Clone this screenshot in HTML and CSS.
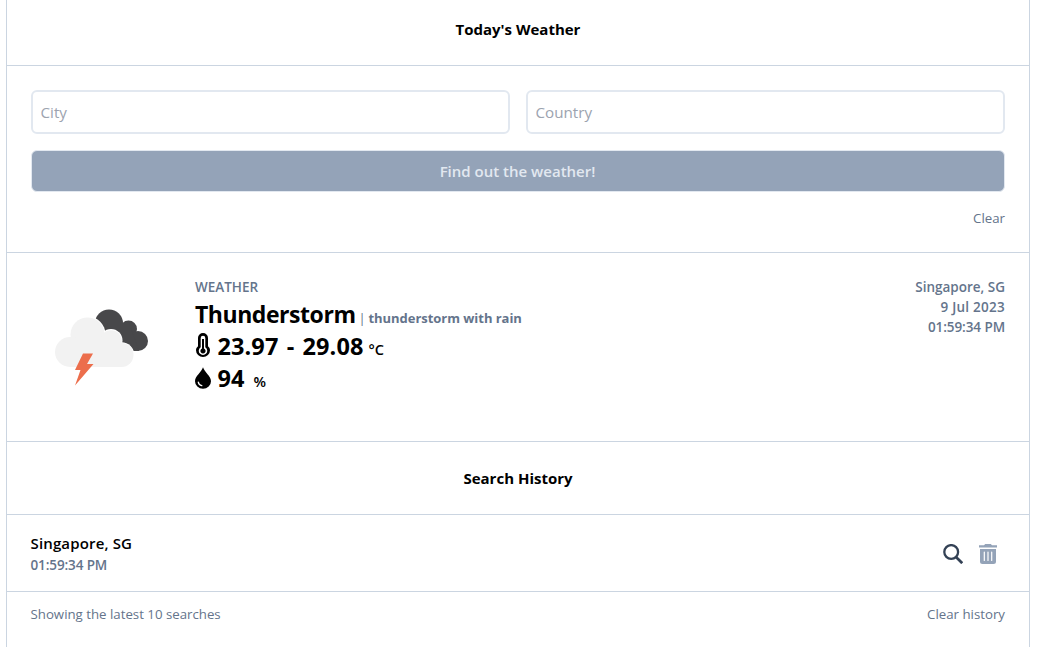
FILE: index.html
```
<!DOCTYPE html>
<html lang="en">
<head>
<meta charset="utf-8">
<title>Today's Weather</title>
<link rel="stylesheet" href="styles.css">
</head>
<body>
<main class="panel">
  <header class="heading heading-top"><h1>Today's Weather</h1></header>
  <form class="search">
    <div class="fields">
      <input class="field" type="text" placeholder="City">
      <input class="field" type="text" placeholder="Country">
    </div>
    <button class="submit" type="button">Find out the weather!</button>
    <div class="actions"><a class="link">Clear</a></div>
  </form>
  <section class="weather">
    <svg class="art" viewBox="0 0 164 140">
      <g fill="#48484a"><circle cx="78" cy="46.500" r="14"/><circle cx="97.500" cy="52" r="8.500"/><circle cx="107" cy="64" r="10"/><path d="M76 46h22l10 28H80z"/></g>
      <g fill="#fff"><circle cx="56.500" cy="57.500" r="18"/><circle cx="80" cy="63.500" r="11.500"/><circle cx="90.500" cy="78" r="12.800"/></g>
      <g fill="#f2f2f2"><circle cx="56.500" cy="57.500" r="17"/><circle cx="39" cy="75" r="15"/><circle cx="80" cy="64" r="10.800"/><circle cx="90.500" cy="78" r="12"/><path d="M39 62h42l9 15v13H39z"/></g>
      <path fill="#ec6e4c" d="M52 76.500h10l-6 10.500h6.500L44 108.500l5.500-15.500H44z"/>
    </svg>
    <div class="facts">
      <p class="label">WEATHER</p>
      <p class="fact"><span class="big name">Thunderstorm</span><span class="desc"><span class="bar">|</span> thunderstorm with rain</span></p>
      <p class="fact"><svg class="icon" viewBox="0 0 16 24"><path fill="#000" d="M8 0a5 5 0 0 0-5 5v8.200C1.700 14.300 1 15.700 1 17.300a7 6.700 0 0 0 14 0c0-1.600-.7-3-2-4.100V5a5 5 0 0 0-5-5z"/><path fill="#fff" d="M8 2.700A2.300 2.300 0 0 0 5.700 5v9.300a4.200 4.200 0 1 0 4.600 0V5A2.300 2.300 0 0 0 8 2.700z"/><path fill="#000" d="M7 6h2v9.500a2.600 2.600 0 1 1-2 0z"/></svg><span class="big temp">23.97 - 29.08</span><span class="unit">°C</span></p>
      <p class="fact"><svg class="icon drop" viewBox="0 0 16 24"><path fill="#000" d="M8 1.200C6.500 6.200 0 10 0 15.200a8 7.500 0 0 0 16 0C16 10 9.500 6.200 8 1.200z"/><path fill="none" stroke="#fff" stroke-width="1.300" stroke-linecap="round" d="M3.300 16.200a4.200 4.200 0 0 0 3.500 3.500"/></svg><span class="big">94</span><span class="unit percent">%</span></p>
    </div>
    <div class="place"><p>Singapore, SG</p><p class="date">9 Jul 2023</p><p class="time">01:59:34 PM</p></div>
  </section>
  <header class="heading"><h2>Search History</h2></header>
  <section class="entry">
    <div><p class="entry-name">Singapore, SG</p><p class="entry-time">01:59:34 PM</p></div>
    <div class="tools">
      <svg class="tool" viewBox="0 0 20 20" fill="none" stroke="#334155"><circle cx="8.200" cy="8" r="6.900" stroke-width="2.300"/><path d="M13 13l6.200 6.200" stroke-width="2.700"/></svg>
      <svg class="tool" viewBox="0 0 20 20"><path fill="#94a3b8" d="M1 1.300h5L7.200.1h5.600L14 1.300h5v2.300H1zM2 5h16v12.500a2.500 2.500 0 0 1-2.500 2.500h-11A2.500 2.500 0 0 1 2 17.500z"/><path stroke="#fff" stroke-width="1.200" stroke-linecap="round" d="M6.300 8v8.500M10 8v8.500M13.700 8v8.500"/></svg>
    </div>
  </section>
  <footer class="foot"><span>Showing the latest 10 searches</span><a class="link">Clear history</a></footer>
</main>
</body>
</html>
```
FILE: styles.css
```
* { box-sizing: border-box; }
body { margin: 0; background: #fff; color: #000; font-family: "Open Sans", "Noto Sans", sans-serif; font-size: 13.250px; line-height: 20px; overflow: hidden; }
h1, h2, p { margin: 0; }
span, a, p { white-space: nowrap; }
.panel { width: 1024px; height: 647px; margin-left: 6px; border: solid #cbd5e1; border-width: 0 1px; }
.heading { padding: 24px; border-bottom: 1px solid #cbd5e1; text-align: center; }
.heading-top { padding-top: 17px; }
.heading h1, .heading h2 { font-size: 15px; line-height: 24px; font-weight: 700; }
.search { padding: 24px; border-bottom: 1px solid #cbd5e1; }
.fields { display: grid; grid-template-columns: 1fr 1fr; gap: 16px; }
.field { width: 100%; height: 44px; padding: 8px 7.500px; border: 2px solid #e2e8f0; border-radius: 6px; background: #fff; font-family: inherit; font-size: 15.200px; line-height: 24px; }
.field::placeholder { color: #9ca3af; }
.submit { display: block; width: 100%; height: 42px; margin: 16px 0; padding: 0 1px 0 0; border: 1px solid #e2e8f0; border-radius: 6px; background: #94a3b8; color: #e2e8f0; font-family: inherit; font-size: 15px; font-weight: 600; }
.actions { display: flex; justify-content: flex-end; }
.link { color: #64748b; }
.weather { display: flex; padding: 24px; border-bottom: 1px solid #cbd5e1; }
.art { width: 164px; height: 140px; }
.facts { flex: 1; }
.label { color: #64748b; font-size: 13.500px; font-weight: 600; }
.fact { display: flex; align-items: baseline; height: 32px; padding-top: 1px; line-height: 32px; font-weight: 700; }
.big { font-size: 23.500px; }
.name { font-size: 23px; letter-spacing: -0.450px; }
.temp { letter-spacing: 0.100px; word-spacing: 2px; }
.icon { width: 16px; height: 24px; margin: 3px 6.500px 0 0; align-self: flex-start; }
.drop { margin-top: 4px; }
.desc { margin-left: 3px; color: #64748b; font-size: 13px; letter-spacing: -0.040px; }
.bar { margin-right: -0.500px; font-weight: 400; }
.unit { margin-left: 5px; font-size: 14.500px; font-weight: 600; }
.percent { margin-left: 9px; }
.place { color: #64748b; font-size: 13.500px; font-weight: 600; text-align: right; }
.date { letter-spacing: 0.250px; }
.time { letter-spacing: -0.080px; }
.entry { display: flex; align-items: center; justify-content: space-between; padding: 16px 24px 16px 23.500px; border-bottom: 1px solid #cbd5e1; }
.entry-name { font-size: 15px; line-height: 24px; font-weight: 600; letter-spacing: 0.150px; }
.entry-time { color: #64748b; font-size: 13.500px; font-weight: 600; letter-spacing: -0.120px; }
.tools { display: flex; gap: 15px; padding: 2px 7px 0 0; }
.tool { width: 20px; height: 20px; }
.foot { display: flex; justify-content: space-between; padding: 12px 24px 12px 23.500px; color: #64748b; }
```
